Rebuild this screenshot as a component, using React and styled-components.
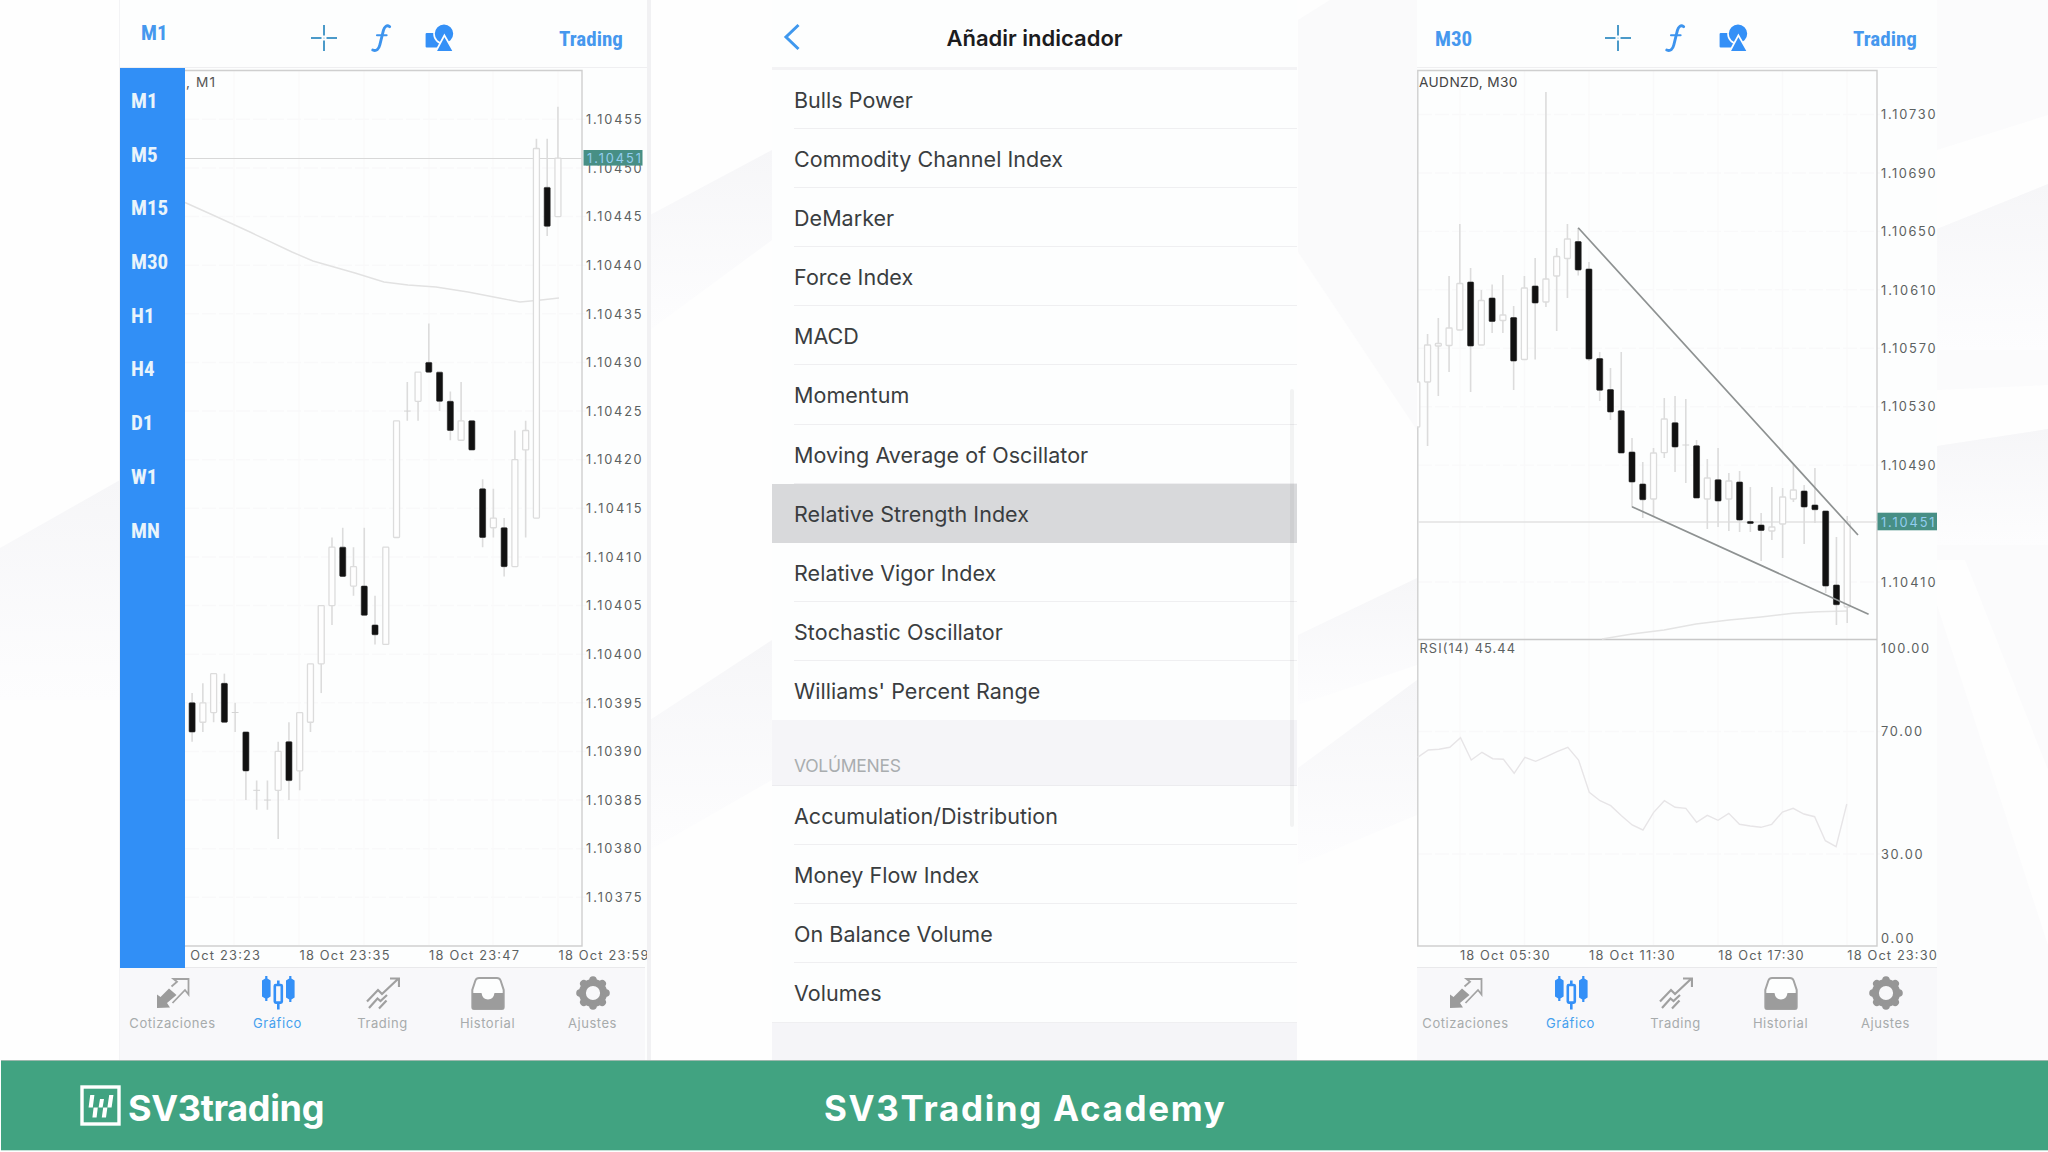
import styled, { createGlobalStyle } from "styled-components";

const BLUE = "#3490f7";
const UI_FONT = `Inter, "Liberation Sans", sans-serif`;

const GlobalStyle = createGlobalStyle`
  * {
    box-sizing: border-box;
  }

  body {
    margin: 0;
    background: #fefefe;
    font-family: ${UI_FONT};
  }
`;

const Page = styled.div`
  position: relative;
  display: flex;
  flex-direction: column;
  width: 2048px;
  height: 1152px;
  overflow: hidden;
  background: #fefefe;
`;

const Backdrop = styled.svg`
  position: absolute;
  inset: 0;
`;

const Screens = styled.main`
  position: relative;
  display: flex;
  height: 1060px;
  padding-left: 120px;
`;

const Phone = styled.section`
  position: relative;
  display: flex;
  flex-direction: column;
  width: ${({ $width }) => $width}px;
  margin-right: ${({ $gap }) => $gap || 0}px;
  height: 1060px;
  overflow: hidden;
  flex-shrink: 0;
  background: #fdfefe;
  box-shadow: ${({ $edge }) => ($edge ? "4px 0 0 #f1f1f3, -1px 0 0 #f3f3f5" : "none")};
`;

const TopBar = styled.header`
  display: flex;
  align-items: center;
  height: 68px;
  padding-top: 8px;
  padding-left: ${({ $inset }) => $inset}px;
  border-bottom: 1px solid #efeff1;
  flex-shrink: 0;
`;

const BarLink = styled.span`
  width: ${({ $width }) => $width}px;
  margin-top: ${({ $lift }) => ($lift ? -10 : 2)}px;
  font-family: "Liberation Sans Narrow", "Roboto Condensed", sans-serif;
  font-weight: 700;
  font-size: 21px;
  line-height: 24px;
  color: #4698ee;
`;

const Tools = styled.div`
  display: flex;
  align-items: center;
  gap: 30px;
  width: 249px;
`;

const ChartArea = styled.div`
  position: relative;
  height: 899px;
  flex-shrink: 0;

  svg {
    display: block;
  }
`;

const PeriodMenu = styled.nav`
  position: absolute;
  top: 0;
  left: 0;
  display: flex;
  flex-direction: column;
  width: 65px;
  height: 900px;
  padding: 7px 0 0 11px;
  background: #318ff6;
`;

const Period = styled.span`
  height: 53.7px;
  font-family: "Liberation Sans Narrow", "Roboto Condensed", sans-serif;
  font-weight: 700;
  font-size: 21px;
  line-height: 53.7px;
  color: #e9f4fb;
`;

const TabBar = styled.footer`
  display: flex;
  height: 93px;
  margin-left: ${({ $shift }) => $shift || 0}px;
  width: 525px;
  background: #f8f8fa;
  border-top: 1px solid #e9e9eb;
`;

const Tab = styled.div`
  display: flex;
  flex-direction: column;
  align-items: center;
  flex: 1;
  padding-top: 8px;
  gap: 5px;
  font-size: 13px;
  line-height: 17px;
  letter-spacing: 0.55px;
  color: ${({ $active }) => ($active ? "#45a0ee" : "#a7abac")};
`;

const ListHeader = styled.header`
  display: grid;
  grid-template-columns: 60px 1fr 60px;
  align-items: center;
  height: 70px;
  padding-top: 7px;
  border-bottom: 3px solid #f3f3f5;
  flex-shrink: 0;

  h1 {
    margin: 0;
    padding-top: 1px;
    text-align: center;
    font-size: 22px;
    font-weight: 600;
    color: #1c1c1e;
  }

  svg {
    margin-left: 11px;
  }
`;

const Row = styled.div`
  display: flex;
  height: 59.1px;
  padding-left: 22px;
  flex-shrink: 0;
  background: ${({ $selected }) => ($selected ? "#d8d9db" : "transparent")};
`;

const RowText = styled.span`
  flex: 1;
  font-size: 21.5px;
  line-height: 60px;
  letter-spacing: 0.04px;
  color: #3a3d3f;
  border-bottom: 1px solid ${({ $plain }) => ($plain ? "transparent" : "#efeff1")};
`;

const SectionTitle = styled.div`
  height: 66px;
  padding: 35px 0 0 22px;
  flex-shrink: 0;
  background: #f5f5f8;
  border-bottom: 1px solid #ececef;
  font-size: 17.5px;
  line-height: 22px;
  letter-spacing: -0.25px;
  color: #a9adaf;
`;

const ListEnd = styled.div`
  flex: 1;
  background: #f5f5f8;
  border-top: 1px solid #efeff1;
`;

const ScrollThumb = styled.div`
  position: absolute;
  top: 389px;
  right: 3px;
  width: 4px;
  height: 438px;
  border-radius: 2px;
  background: rgba(0, 0, 0, 0.045);
`;

const Banner = styled.footer`
  position: relative;
  display: grid;
  grid-template-columns: 744px 1fr;
  align-items: center;
  height: 91px;
  margin-left: 1px;
  padding: 0 0 0 79px;
  background: #41a381;
  border-top: 1px solid #9db8ae;
  border-bottom: 1px solid #c5e2d8;
  color: #fff;
`;

const Brand = styled.div`
  display: flex;
  align-items: center;
  gap: 7px;
  font-size: 36px;
  font-weight: 700;
  letter-spacing: -0.35px;

  span {
    padding-top: 4px;
  }
`;

const BannerTitle = styled.div`
  padding-top: 4px;
  font-size: 35px;
  font-weight: 700;
  letter-spacing: 1.65px;
`;

// body top, body bottom, high, low, filled (prices in points above 1.10)
const M1_CANDLES = [
  [395, 392, 396, 391, 1],
  [395, 393, 397, 392, 0],
  [398, 394, 398, 393, 0],
  [397, 393, 398, 393, 1],
  [394, 394, 395, 392, 0],
  [392, 388, 392, 385, 1],
  [386, 386, 387, 384, 0],
  [385, 385, 387, 384, 0],
  [390, 386, 391, 381, 0],
  [391, 387, 393, 385, 1],
  [394, 388, 394, 386, 0],
  [399, 393, 399, 392, 0],
  [405, 399, 405, 396, 0],
  [411, 405, 412, 403, 0],
  [411, 408, 413, 408, 1],
  [409, 407, 411, 406, 0],
  [407, 404, 413, 404, 1],
  [403, 402, 406, 401, 1],
  [411, 401, 411, 401, 0],
  [424, 412, 424, 412, 0],
  [425, 425, 428, 424, 0],
  [429, 426, 429, 424, 0],
  [430, 429, 434, 429, 1],
  [429, 426, 429, 425, 1],
  [426, 423, 427, 422, 1],
  [424, 422, 428, 422, 0],
  [424, 421, 424, 421, 1],
  [417, 412, 418, 411, 1],
  [414, 413, 417, 412, 0],
  [413, 409, 414, 408, 1],
  [420, 409, 423, 409, 0],
  [423, 421, 424, 412, 0],
  [452, 414, 453, 414, 0],
  [448, 444, 453, 443, 1],
  [451, 445, 456.3, 445, 0],
];

// same order, already in chart pixels
const M30_CANDLES = [
  [382, 427, 382, 427, 0],
  [345, 382, 334, 446, 0],
  [343.5, 346, 318, 396, 0],
  [328, 345.5, 276, 372, 0],
  [283.5, 330, 224, 330, 0],
  [282, 346, 268, 392, 1],
  [300.5, 345, 290, 345, 0],
  [298, 321.5, 284.5, 333, 1],
  [315, 320.5, 275, 333, 0],
  [317.5, 361, 306, 390, 1],
  [288, 359.5, 276, 359.5, 0],
  [286, 303, 258, 359.5, 1],
  [279, 302, 92, 307, 0],
  [256.5, 276, 248, 331, 0],
  [239, 258.5, 224, 298, 0],
  [241.5, 270, 228, 275.5, 1],
  [269, 359, 262, 361, 1],
  [358.5, 390.3, 352, 401, 1],
  [389.5, 412, 368, 420, 1],
  [410.7, 453, 352, 453, 1],
  [452, 482, 438, 507, 1],
  [484, 499.7, 462, 518, 1],
  [453, 499, 448, 517, 0],
  [419, 452.7, 398, 458, 0],
  [422.7, 447, 396, 472, 1],
  [445, 445, 399, 483, 0],
  [445.7, 498, 440, 498, 1],
  [478, 499, 459, 529, 0],
  [479.7, 501, 448, 527, 1],
  [481, 499, 473, 531, 0],
  [482, 520, 471, 532, 1],
  [521.5, 523.5, 487, 532, 1],
  [525, 530.5, 513, 561, 1],
  [527, 531, 487, 540, 0],
  [497, 524, 488, 558, 0],
  [490, 499, 464, 502, 0],
  [491, 507, 485, 544, 1],
  [505, 509.7, 468, 523, 1],
  [511, 586, 511, 593, 1],
  [585, 604.7, 537, 625, 1],
  [522, 607, 516, 623, 0],
];

const RSI = [
  757.3, 750, 749.3, 747.3, 737.7, 760, 752.3, 758.7, 759.3, 773.3, 757.3,
  761.3, 756.7, 751.7, 747.3, 760, 792.3, 800.7, 805.7, 815.7, 825, 830, 812.3,
  800.7, 807.3, 808.3, 822.3, 815.3, 820.3, 813.3, 824.3, 826, 827.3, 824.3,
  812, 808.3, 814, 816.7, 840.7, 846.7, 804,
];

const STEP = 10.76;
const m1Y = (p) => 119.3 + (455 - p) * 9.725;
const m30Y = (p) => 114.5 + (730 - p) * 1.461;

const Candles = ({ data, start, toY }) =>
  data.map(([top, bottom, high, low, filled], i) => {
    const x = start + i * STEP;
    const t = toY(top);
    const b = toY(bottom);
    return (
      <g key={i}>
        <path
          d={`M${x} ${toY(high)}V${t}M${x} ${b}V${toY(low)}`}
          stroke="#dcdcdc"
          strokeWidth="1.6"
        />
        {t === b ? (
          <path d={`M${x - 3.4} ${t}H${x + 3.4}`} stroke="#d4d4d4" />
        ) : (
          <rect
            x={x - 3}
            y={t}
            width="6"
            height={b - t}
            rx="0.8"
            fill={filled ? "#111" : "#fefefe"}
            stroke={filled ? "#222" : "#dcdcdc"}
            strokeWidth={filled ? 0.6 : 1.3}
          />
        )}
      </g>
    );
  });

const Label = ({ x, y, width, fill = "#5c6161", size = 12.8, children }) => (
  <text
    x={x}
    y={y + 4.7}
    textLength={width}
    fontSize={size}
    fontFamily={UI_FONT}
    fill={fill}
  >
    {children}
  </text>
);

const Grid = ({ xs, ys, left, right }) => (
  <g stroke="#f9f9fa" strokeWidth="1.4">
    {xs.map((x) => (
      <path key={x} d={`M${x} 71V945`} />
    ))}
    {ys.map((y) => (
      <path key={y} d={`M${left} ${y}H${right}`} strokeDasharray="14 3" />
    ))}
  </g>
);

const M1Chart = () => {
  const prices = Array.from({ length: 17 }, (_, i) => 455 - i * 5);
  return (
    <svg width="527" height="899" viewBox="120 68 527 899">
      <Grid
        xs={[234, 299, 364, 429, 493, 558]}
        ys={prices.map(m1Y)}
        left={185}
        right={586}
      />
      <path d="M120 70.5H582V946H120" fill="none" stroke="#cfcfcf" strokeWidth="1.4" />
      <path d="M185 158.5H582" stroke="#d8d8d8" strokeWidth="1.2" />
      <path
        d="M185 202.5L215 216L250 232L292 252L313 261L355 273L384 282L408 285L436 287L468 292L499 298L520 302L541 300L559 298"
        fill="none"
        stroke="#e2e2e2"
        strokeWidth="1.4"
      />
      <Candles data={M1_CANDLES} start={192.1} toY={m1Y} />
      {prices.map((p) => (
        <Label key={p} x={586} y={m1Y(p)} width={55.5}>{`1.10${p}`}</Label>
      ))}
      <rect x="583.5" y="150" width="59" height="15.6" fill="#478f85" />
      <Label x={587} y={158} width={54} fill="#93cdf0">
        1.10451
      </Label>
      <Label x={122} y={82} width={93} size={13.7} fill="#555">
        AUDNZD, M1
      </Label>
      {["23", "35", "47", "59"].map((m, i) => (
        <Label key={m} x={170 + i * 129.5} y={955.5} width={90}>
          {`18 Oct 23:${m}`}
        </Label>
      ))}
    </svg>
  );
};

const M30Chart = () => {
  const prices = [730, 690, 650, 610, 570, 530, 490, 410];
  const rsi = RSI.map((y, i) => `${1417.6 + i * 10.73},${y}`).join(" ");
  return (
    <svg width="520" height="899" viewBox="1417 68 520 899">
      <Grid
        xs={[1460, 1524.5, 1589, 1653.5, 1718, 1782.5, 1847]}
        ys={[...prices.map(m30Y), 731.5, 854]}
        left={1418}
        right={1880}
      />
      <path d="M1417.8 946V70.5H1877V946Z" fill="none" stroke="#cfcfcf" strokeWidth="1.4" />
      <path d="M1418 639.5H1877" stroke="#c8c8c8" strokeWidth="1.3" />
      <path d="M1418 522H1877" stroke="#e2e2e2" strokeWidth="1.5" />
      <path
        d="M1602 639L1632 634L1664 630L1696 624L1729 620L1761 617L1793 613.3L1818 611.7L1847 611"
        fill="none"
        stroke="#e4e4e4"
        strokeWidth="1.4"
      />
      <Candles data={M30_CANDLES} start={1416.8} toY={(v) => v} />
      <path
        d="M1578.2 227.7L1858 535M1632 506.7L1868.6 614.3"
        stroke="#8e9292"
        strokeWidth="1.7"
      />
      <polyline points={rsi} fill="none" stroke="#e7e5e7" strokeWidth="1.4" />
      {prices.map((p) => (
        <Label key={p} x={1881} y={m30Y(p)} width={54.5}>{`1.10${p}`}</Label>
      ))}
      <rect x="1877.5" y="512.7" width="60" height="17.6" fill="#478f85" />
      <Label x={1881} y={522} width={53.5} fill="#93cdf0">
        1.10451
      </Label>
      <Label x={1881} y={648} width={48}>100.00</Label>
      <Label x={1881} y={731.7} width={41}>70.00</Label>
      <Label x={1881} y={854} width={41.5}>30.00</Label>
      <Label x={1881} y={938.3} width={32.5}>0.00</Label>
      <Label x={1419} y={82} width={98.5} size={13.7} fill="#444">
        AUDNZD, M30
      </Label>
      <Label x={1419.5} y={648} width={95.5}>RSI(14) 45.44</Label>
      {["05", "11", "17", "23"].map((h, i) => (
        <Label key={h} x={1460 + i * 129.1} y={955.5} width={i % 3 ? 85.5 : 89.5}>
          {`18 Oct ${h}:30`}
        </Label>
      ))}
    </svg>
  );
};

const CrosshairIcon = () => (
  <svg width="28" height="28" viewBox="0 0 28 28" stroke="#4b9ac9" strokeWidth="2">
    <path d="M1 14H11.5M16.5 14H27M14 1V11.5M14 16.5V27" />
    <circle cx="14" cy="14" r="0.6" stroke="none" fill="#4b9ac9" />
  </svg>
);

const FunctionIcon = () => (
  <svg width="28" height="28" viewBox="0 0 28 28" fill="none" stroke="#3d94ee" strokeLinecap="round">
    <path
      d="M21.6 2.6C18.8 0.7 16.4 2.6 15.4 6.4L11.8 21C10.8 25.2 8.4 27.4 4.8 26"
      strokeWidth="2.9"
    />
    <path d="M9 11.2H18.6" strokeWidth="2.1" />
  </svg>
);

const ShapesIcon = () => (
  <svg width="28" height="28" viewBox="0 0 28 28" fill={BLUE} overflow="visible">
    <rect x="-0.4" y="9" width="14" height="14.5" rx="1" />
    <circle cx="18" cy="9.8" r="10" stroke="#fdfefe" strokeWidth="1.6" />
    <path d="M18.4 11.4L27.8 27.8H9.6Z" stroke="#fdfefe" strokeWidth="1.8" />
  </svg>
);

const QuotesIcon = () => (
  <svg width="34" height="34" viewBox="0 0 34 34">
    <path d="M1 32V18.5L4.5 21L13 12.5L20.5 19L11 27L14 31.5Z" fill="#9b9b9b" />
    <path
      d="M15.5 10.5L21 5.8L17.5 3H32.5V18.5L29 14L16.5 27"
      fill="none"
      stroke="#a3a3a3"
      strokeWidth="1.8"
    />
  </svg>
);

const CandlesIcon = () => (
  <svg width="34" height="34" viewBox="0 0 34 34" fill={BLUE}>
    <path d="M4.2 0H6.4V2.6L9.6 4.4V20.6L6.4 22.4V25H4.2V22.4L1 20.6V4.4L4.2 2.6Z" />
    <path d="M28.2 0H30.4V2.6L33.6 4.4V21.6L30.4 23.4V26H28.2V23.4L25 21.6V4.4L28.2 2.6Z" />
    <rect x="13.8" y="9" width="7" height="17.6" rx="1" fill="#f8f8fa" stroke={BLUE} strokeWidth="2.6" />
    <path d="M16 4.5H18.6V9H16ZM16 26H18.6V33.5H16Z" />
  </svg>
);

const TradeIcon = () => (
  <svg width="34" height="34" viewBox="0 0 34 34" fill="none" stroke="#a0a0a0" strokeWidth="2.2">
    <path d="M1 25.5L12 14L16 18L32.5 2.5M24 2.5H33V11" />
    <path d="M3 32L11.5 22.5L14.5 25L21 19M13 32.5L20.5 24.5" />
  </svg>
);

const HistoryIcon = () => (
  <svg width="34" height="34" viewBox="0 0 34 34">
    <path
      d="M8 2H26Q28.6 2 29.6 4.5L32.7 14V31Q32.7 33 31 33H3Q1.3 33 1.3 31V14L4.4 4.5Q5.4 2 8 2Z"
      fill="#fdfefe"
      stroke="#a3a3a3"
      strokeWidth="2"
    />
    <path d="M1.3 17H10.5Q11.5 23.5 17 23.5T23.5 17H32.7V33H1.3Z" fill="#9c9c9c" />
  </svg>
);

const GearIcon = () => (
  <svg width="34" height="34" viewBox="0 0 34 34" fill="#969696">
    <circle cx="17" cy="17" r="10.6" fill="none" stroke="#969696" strokeWidth="7" />
    {Array.from({ length: 8 }, (_, i) => (
      <circle key={i} cx="17" cy="4" r="3.8" transform={`rotate(${i * 45} 17 17)`} />
    ))}
  </svg>
);

const TABS = [
  ["Cotizaciones", QuotesIcon],
  ["Gráfico", CandlesIcon],
  ["Trading", TradeIcon],
  ["Historial", HistoryIcon],
  ["Ajustes", GearIcon],
];

const Tabs = ({ shift }) => (
  <TabBar $shift={shift}>
    {TABS.map(([name, Icon]) => (
      <Tab key={name} $active={name === "Gráfico"}>
        <Icon />
        {name}
      </Tab>
    ))}
  </TabBar>
);

const Toolbar = ({ period, inset, lift }) => (
  <TopBar $inset={inset}>
    <BarLink $width={169} $lift={lift}>
      {period}
    </BarLink>
    <Tools>
      <CrosshairIcon />
      <FunctionIcon />
      <ShapesIcon />
    </Tools>
    <BarLink $width={70}>Trading</BarLink>
  </TopBar>
);

const PERIODS = ["M1", "M5", "M15", "M30", "H1", "H4", "D1", "W1", "MN"];

const OSCILLATORS = [
  "Bulls Power",
  "Commodity Channel Index",
  "DeMarker",
  "Force Index",
  "MACD",
  "Momentum",
  "Moving Average of Oscillator",
  "Relative Strength Index",
  "Relative Vigor Index",
  "Stochastic Oscillator",
  "Williams' Percent Range",
];

const VOLUMES = [
  "Accumulation/Distribution",
  "Money Flow Index",
  "On Balance Volume",
  "Volumes",
];

const IndicatorRows = ({ items }) =>
  items.map((name, i) => {
    const selected = name === "Relative Strength Index";
    return (
      <Row key={name} $selected={selected}>
        <RowText $plain={selected || i === items.length - 1}>{name}</RowText>
      </Row>
    );
  });

const BrandMark = () => (
  <svg width="41" height="41" viewBox="0 0 41 41" fill="#fff">
    <rect x="2" y="2" width="37" height="37" fill="none" stroke="#fff" strokeWidth="3.4" />
    <path d="M10.2 10H14.4L12.8 22.5H8.6ZM20 14H24L22.6 22.5H18.6ZM29.2 10H33.4L31.6 22.5H27.4Z" />
    <path d="M13.6 22.5H17.8L16.6 32.5H12.4ZM23.2 22.5H27.4L26 32.5H21.8Z" />
  </svg>
);

const Background = () => (
  <Backdrop width="2048" height="1060">
    <defs>
      <linearGradient id="fade" x1="0" y1="0" x2="0" y2="1">
        <stop offset="0" stopColor="#f6f6f8" />
        <stop offset="1" stopColor="#fdfdfe" />
      </linearGradient>
    </defs>
    <g fill="url(#fade)">
      <path d="M0 548L120 480V700H0Z" />
      <path d="M650 215L772 150V240L650 330Z" />
      <path d="M650 720L772 640V780L650 850Z" />
      <path d="M1298 635L1417 578V665L1298 705Z" />
      <path d="M1298 768L1417 680V815L1298 865Z" />
    </g>
    <path d="M1298 20L1330 0H1417V430L1298 252Z" fill="#fafafb" />
    <path d="M1937 0H2048V1060H1937Z" fill="#fbfbfc" />
    <path d="M1937 150L2048 115V184L1937 229Z" fill="#fefefe" />
    <path d="M1937 390L2048 385V429L1937 446Z" fill="#fefefe" />
    <path d="M1937 560H1965L2048 770V945L1937 605Z" fill="#fefefe" />
    <path d="M1937 229L2048 184V350H1937Z" fill="url(#fade)" />
    <path d="M1937 446L2048 429V545H1937Z" fill="url(#fade)" />
  </Backdrop>
);

export default function App() {
  return (
    <>
      <GlobalStyle />
      <Page>
        <Background />
        <Screens>
          <Phone $width={527} $gap={125} $edge>
            <Toolbar period="M1" inset={21} lift />
            <ChartArea>
              <M1Chart />
              <PeriodMenu>
                {PERIODS.map((name) => (
                  <Period key={name}>{name}</Period>
                ))}
              </PeriodMenu>
            </ChartArea>
            <Tabs />
          </Phone>
          <Phone $width={525} $gap={120}>
            <ListHeader>
              <svg width="18" height="28" viewBox="0 0 18 28" fill="none" stroke="#3f98ee" strokeWidth="3">
                <path d="M15.5 2L3 14L15.5 26" />
              </svg>
              <h1>Añadir indicador</h1>
            </ListHeader>
            <IndicatorRows items={OSCILLATORS} />
            <SectionTitle>VOLÚMENES</SectionTitle>
            <IndicatorRows items={VOLUMES} />
            <ListEnd />
            <ScrollThumb />
          </Phone>
          <Phone $width={520}>
            <Toolbar period="M30" inset={18} />
            <ChartArea>
              <M30Chart />
            </ChartArea>
            <Tabs shift={-4} />
          </Phone>
        </Screens>
        <Banner>
          <Brand>
            <BrandMark />
            <span>SV3trading</span>
          </Brand>
          <BannerTitle>SV3Trading Academy</BannerTitle>
        </Banner>
      </Page>
    </>
  );
}
